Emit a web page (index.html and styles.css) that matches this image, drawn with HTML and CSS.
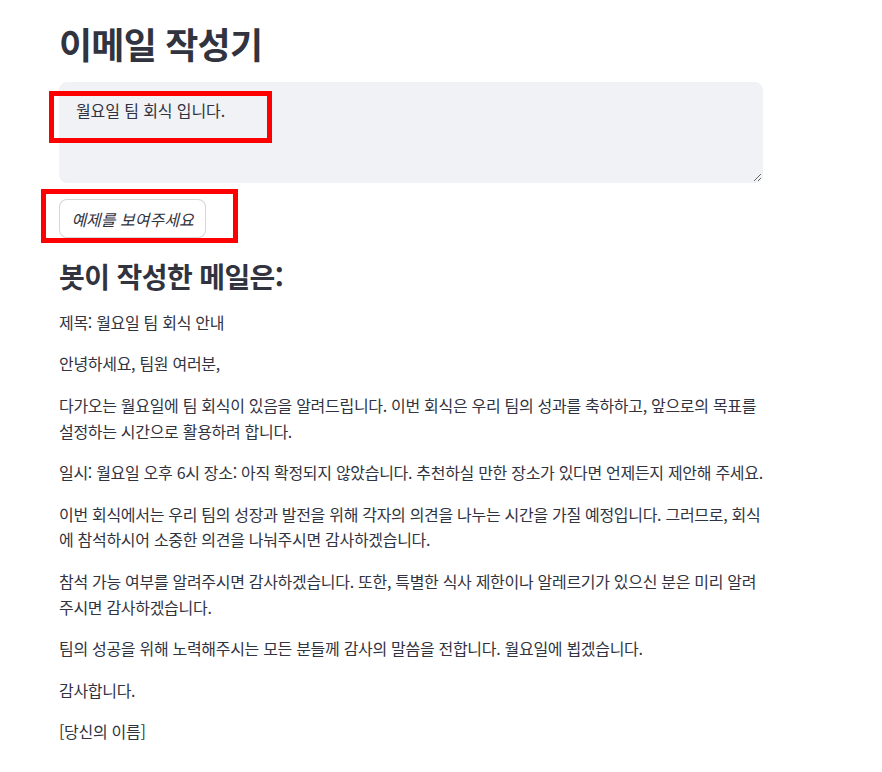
FILE: index.html
```html
<!DOCTYPE html>
<html lang="ko">
<head>
    <meta charset="UTF-8">
    <meta name="viewport" content="width=device-width, initial-scale=1.0">
    <title>이메일 작성기</title>
    <link rel="stylesheet" href="styles.css">
</head>
<body>
    <main class="block">
        <h1 class="title">이메일 작성기</h1>

        <textarea class="prompt" aria-label="이메일 내용">월요일 팀 회식 입니다.</textarea>

        <div class="actions">
            <button class="example-btn"><em>예제를 보여주세요</em></button>
        </div>

        <h3 class="reply-title">봇이 작성한 메일은:</h3>

        <div class="reply">
            <p>제목: 월요일 팀 회식 안내</p>
            <p>안녕하세요, 팀원 여러분,</p>
            <p>다가오는 월요일에 팀 회식이 있음을 알려드립니다. 이번 회식은 우리 팀의 성과를 축하하고, 앞으로의 목표를 설정하는 시간으로 활용하려 합니다.</p>
            <p>일시: 월요일 오후 6시 장소: 아직 확정되지 않았습니다. 추천하실 만한 장소가 있다면 언제든지 제안해 주세요.</p>
            <p>이번 회식에서는 우리 팀의 성장과 발전을 위해 각자의 의견을 나누는 시간을 가질 예정입니다. 그러므로, 회식에 참석하시어 소중한 의견을 나눠주시면 감사하겠습니다.</p>
            <p>참석 가능 여부를 알려주시면 감사하겠습니다. 또한, 특별한 식사 제한이나 알레르기가 있으신 분은 미리 알려주시면 감사하겠습니다.</p>
            <p>팀의 성공을 위해 노력해주시는 모든 분들께 감사의 말씀을 전합니다. 월요일에 뵙겠습니다.</p>
            <p>감사합니다.</p>
            <p>[당신의 이름]</p>
        </div>
    </main>

    <!-- red annotation boxes drawn over the screenshot -->
    <div class="mark mark-prompt"></div>
    <div class="mark mark-button"></div>
</body>
</html>
```

FILE: styles.css
```css
body {
    font-family: "Noto Sans CJK KR", "Noto Sans", sans-serif;
    background-color: #ffffff;
    color: rgb(49, 51, 63);
    margin: 0;
    position: relative;
    min-height: 772px;
}

.block {
    display: flex;
    flex-direction: column;
    align-items: flex-start;
    width: 707px;
    padding: 22px 0 0 59px;
}

.title {
    font-size: 36px;
    font-weight: 700;
    line-height: 1.2;
    letter-spacing: -0.8px;
    margin: 0 0 17px;
}

.prompt {
    width: 704px;
    height: 101px;
    box-sizing: border-box;
    padding: 16px;
    border: 1px solid #f0f2f6;
    border-radius: 8px;
    background-color: #f0f2f6;
    color: rgb(49, 51, 63);
    font-family: inherit;
    font-size: 16px;
    line-height: 1.4;
    letter-spacing: -0.1px;
    resize: vertical;
    outline: none;
}

.actions {
    margin-top: 16px;
}

.example-btn {
    height: 39px;
    padding: 0 11.4px;
    background-color: #ffffff;
    border: 1px solid rgba(49, 51, 63, 0.2);
    border-radius: 8px;
    color: rgb(49, 51, 63);
    font-family: inherit;
    font-size: 16px;
    cursor: pointer;
}

.example-btn em {
    font-style: italic;
}

.reply-title {
    font-size: 28px;
    font-weight: 700;
    line-height: 1.2;
    letter-spacing: -0.6px;
    margin: 22px 0 16px;
}

.reply {
    width: 100%;
}

.reply p {
    font-size: 16px;
    line-height: 1.6;
    letter-spacing: -0.3px;
    margin: 0 0 16px;
}

.mark {
    position: absolute;
    box-sizing: border-box;
    border: 5px solid #ff0000;
}

.mark-prompt {
    left: 49px;
    top: 91px;
    width: 223px;
    height: 52px;
}

.mark-button {
    left: 41px;
    top: 189px;
    width: 197px;
    height: 54px;
}
```
